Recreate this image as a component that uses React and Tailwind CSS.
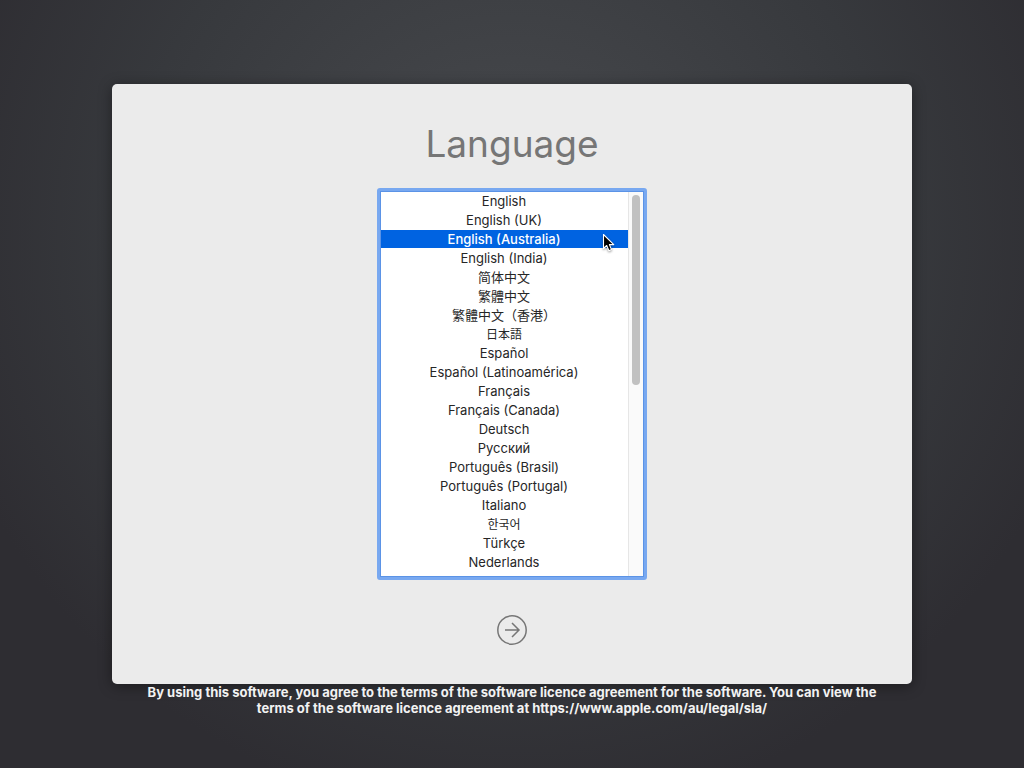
import { useState } from "react";

const languages = [
  { name: "English", lang: "en" },
  { name: "English (UK)", lang: "en-GB" },
  { name: "English (Australia)", lang: "en-AU" },
  { name: "English (India)", lang: "en-IN" },
  { name: "简体中文", lang: "zh-Hans", font: "font-['Noto_Sans_CJK_SC',sans-serif]" },
  { name: "繁體中文", lang: "zh-Hant", font: "font-['Noto_Sans_CJK_TC',sans-serif]" },
  { name: "繁體中文（香港）", lang: "zh-HK", font: "font-['Noto_Sans_CJK_SC',sans-serif]" },
  { name: "日本語", lang: "ja", size: "text-xs", font: "font-['Noto_Sans_CJK_JP',sans-serif]" },
  { name: "Español", lang: "es" },
  { name: "Español (Latinoamérica)", lang: "es-419" },
  { name: "Français", lang: "fr" },
  { name: "Français (Canada)", lang: "fr-CA" },
  { name: "Deutsch", lang: "de" },
  { name: "Русский", lang: "ru" },
  { name: "Português (Brasil)", lang: "pt-BR" },
  { name: "Português (Portugal)", lang: "pt-PT" },
  { name: "Italiano", lang: "it" },
  { name: "한국어", lang: "ko", size: "text-xs", font: "font-['Noto_Sans_CJK_KR',sans-serif]" },
  { name: "Türkçe", lang: "tr" },
  { name: "Nederlands", lang: "nl" },
];

function LanguageRow({ item, selected, onSelect }) {
  return (
    <label
      lang={item.lang}
      className={[
        "flex h-[18px] shrink-0 items-center justify-center pr-px leading-[18px] whitespace-nowrap",
        item.size || "text-[13px]",
        item.font || "",
        selected ? "bg-[#0063e1] font-medium text-white" : "text-[#262626]",
      ].join(" ")}
    >
      <input
        type="radio"
        name="language"
        value={item.lang}
        checked={selected}
        onChange={() => onSelect(item.lang)}
        className="h-0 w-0 appearance-none"
      />
      {item.name}
    </label>
  );
}

function Pointer() {
  return (
    <svg
      viewBox="0 0 14 20"
      aria-hidden="true"
      className="pointer-events-none absolute top-[42px] right-7 h-5 w-3.5 drop-shadow-[0_1px_1px_rgba(0,0,0,0.4)]"
    >
      <path
        d="M1.5 1.5v14l3.2-3 2.2 5.2 2.6-1.1-2.1-5h4.4z"
        fill="#000"
        stroke="#fff"
        strokeWidth="1.1"
        strokeLinejoin="round"
      />
    </svg>
  );
}

export default function App() {
  const [selected, setSelected] = useState("en-AU");

  return (
    <div className="flex min-h-screen flex-col items-center bg-[#2e2d32] bg-[radial-gradient(circle_590px_at_50%_30%,#494b4f_0%,#37393d_65%,#2e2d32_100%)] px-6 pt-21 pb-12 font-[Inter,sans-serif]">
      <main className="flex w-full max-w-[800px] flex-col items-center rounded-[5px] bg-[#ebebeb] pt-9 pb-[38px] shadow-[0_2px_14px_rgba(0,0,0,0.4)]">
        <h1 className="text-[37px] leading-12 text-[#767676]">Language</h1>

        <div
          role="radiogroup"
          aria-label="Language"
          className="relative mt-5 flex h-[392px] w-[270px] rounded-[3px] border-[3px] border-[#78a8f0] bg-white"
        >
          <div className="flex min-w-0 flex-1 border border-[#5b93e6]">
            <div className="flex min-w-0 flex-1 flex-col gap-px overflow-hidden">
              {languages.map((item) => (
                <LanguageRow
                  key={item.lang}
                  item={item}
                  selected={item.lang === selected}
                  onSelect={setSelected}
                />
              ))}
            </div>
            <div className="flex w-[15px] justify-center border-l border-[#e6e6e6] bg-[#fafafa] pt-[3px]">
              <div className="h-[190px] w-2 rounded-full bg-[#c1c1c1]" />
            </div>
          </div>
          <Pointer />
        </div>

        <button type="button" aria-label="Continue" className="mt-[34px] h-8 w-8 text-[#767676]">
          <svg viewBox="0 0 32 32" fill="none" stroke="currentColor" className="h-8 w-8">
            <circle cx="16" cy="16" r="14.2" strokeWidth="1.5" />
            <path d="M9 16h14M16 9l7 7-7 7" strokeWidth="1.5" />
          </svg>
        </button>
      </main>

      <p className="max-w-[760px] text-center text-[13px] leading-4 font-bold text-[#f2f2f2]">
        By using this software, you agree to the terms of the software licence agreement for the
        software. You can view the terms of the software licence agreement at
        https://www.apple.com/au/legal/sla/
      </p>
    </div>
  );
}
